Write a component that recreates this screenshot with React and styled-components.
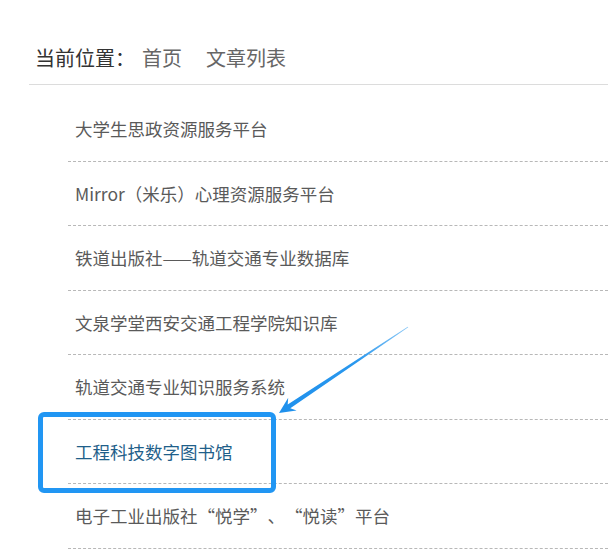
import React from 'react'
import styled, { createGlobalStyle } from 'styled-components'

const GlobalStyle = createGlobalStyle`
  html, body {
    margin: 0;
    padding: 0;
    background: #fff;
  }
  body {
    font-family: "Noto Sans CJK SC", "Noto Sans", sans-serif;
    text-spacing-trim: space-all;
  }
`

const Page = styled.div`
  position: relative;
  width: 608px;
  height: 550px;
  overflow: hidden;
  padding-left: 29px;
  box-sizing: border-box;
`

const Crumbs = styled.div`
  display: flex;
  align-items: center;
  padding: 44px 0 12px 6px;
  line-height: 28px;
  font-size: 20px;
  border-bottom: 1px solid #dcdcdc;
`

const CrumbLabel = styled.span`
  color: #333;
`

const CrumbLink = styled.a`
  color: #666;
  text-decoration: none;
  margin-left: ${p => p.gap}px;
`

const List = styled.ul`
  list-style: none;
  margin: 0 0 0 39px;
  padding: 12px 0 0;
`

const Item = styled.li`
  position: relative;
  display: flex;
  align-items: center;
  height: 63.5px;
  padding-left: 7px;
  border-bottom: 1px dashed #b8b8b8;
  font-size: 17.5px;
  color: ${p => (p.active ? '#1f5f8a' : '#5a5a5a')};
`

const Highlight = styled.div`
  position: absolute;
  left: -30.5px;
  top: -7.5px;
  width: 238px;
  height: 81px;
  box-sizing: border-box;
  border: 5.5px solid #2196f3;
  border-radius: 6px;
  pointer-events: none;
`

const Overlay = styled.svg`
  position: absolute;
  left: 0;
  top: 0;
  pointer-events: none;
`

const items = [
  '大学生思政资源服务平台',
  'Mirror（米乐）心理资源服务平台',
  '铁道出版社——轨道交通专业数据库',
  '文泉学堂西安交通工程学院知识库',
  '轨道交通专业知识服务系统',
  '工程科技数字图书馆',
  '电子工业出版社“悦学”、“悦读”平台',
]

export default function App() {
  return (
    <>
      <GlobalStyle />
      <Page>
        <Crumbs>
          <CrumbLabel>当前位置：</CrumbLabel>
          <CrumbLink gap={7}>首页</CrumbLink>
          <CrumbLink gap={24}>文章列表</CrumbLink>
        </Crumbs>
        <List>
          {items.map((t, i) => (
            <Item key={i} active={i === 5}>
              {t}
              {i === 5 && <Highlight />}
            </Item>
          ))}
        </List>
        <Overlay width="608" height="550" viewBox="0 0 608 550">
          <defs>
            <linearGradient id="arr" x1="408" y1="327" x2="279" y2="413" gradientUnits="userSpaceOnUse">
              <stop offset="0" stopColor="#8cc8f6" />
              <stop offset="0.4" stopColor="#2a98ee" />
              <stop offset="1" stopColor="#1e90ec" />
            </linearGradient>
          </defs>
          <polygon
            fill="url(#arr)"
            points="408.3,327.3 290.3,408.2 296.6,410.4 279,413 288.2,397.8 287.7,404.4 407.7,326.7"
          />
        </Overlay>
      </Page>
    </>
  )
}
